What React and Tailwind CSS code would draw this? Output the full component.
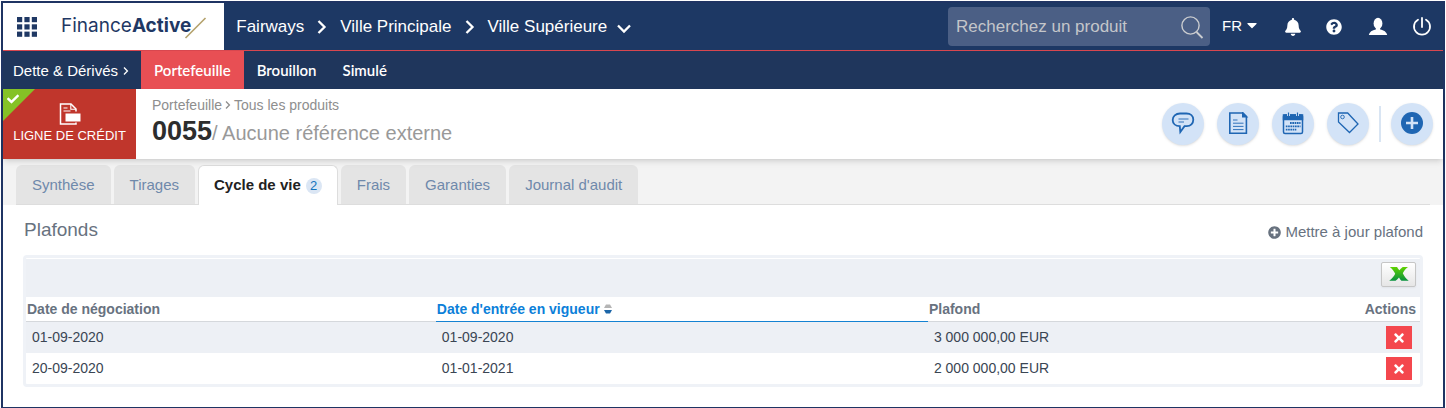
import React, { useState } from "react";
import { FaBell, FaCaretDown, FaCheck, FaPlusCircle, FaQuestionCircle, FaTimes } from "react-icons/fa";

const tabs = [
  { id: "synthese", label: "Synthèse" },
  { id: "tirages", label: "Tirages" },
  { id: "cycle", label: "Cycle de vie", count: 2 },
  { id: "frais", label: "Frais" },
  { id: "garanties", label: "Garanties" },
  { id: "audit", label: "Journal d'audit" },
];

const rows = [
  { negociation: "01-09-2020", vigueur: "01-09-2020", plafond: "3 000 000,00 EUR" },
  { negociation: "20-09-2020", vigueur: "01-01-2021", plafond: "2 000 000,00 EUR" },
];

const Chevron = ({ className }) => (
  <svg className={className} viewBox="0 0 10 14" fill="none" stroke="currentColor" strokeWidth="2.3">
    <path d="M1.500 1l6 6-6 6" />
  </svg>
);

const AppsIcon = () => (
  <svg className="h-5 w-5" viewBox="0 0 20 20" fill="#1f3864">
    {[0, 7.3, 14.6].map((y) =>
      [0, 7.4, 14.8].map((x) => <rect key={x + "-" + y} x={x} y={y} width="5.2" height="5.2" />)
    )}
  </svg>
);

const SearchIcon = () => (
  <svg className="h-6 w-6" viewBox="0 0 24 24" fill="none" stroke="#cbcdd0" strokeWidth="1.4">
    <circle cx="10.5" cy="10.5" r="8.6" />
    <path d="M16.5 17l6 6" strokeWidth="1.8" />
  </svg>
);

const UserIcon = () => (
  <svg className="h-5 w-5" viewBox="0 0 20 20" fill="currentColor">
    <ellipse cx="10" cy="6.400" rx="4.400" ry="5.600" />
    <path d="M7.800 10h4.400v2.400c3.600.5 6.400 2.600 7 5.600H.8c.6-3 3.400-5.100 7-5.600z" />
  </svg>
);

const PowerIcon = () => (
  <svg className="h-5 w-5" viewBox="0 0 20 20" fill="none" stroke="currentColor" strokeWidth="1.800" strokeLinecap="round">
    <path d="M10 1v9" />
    <path d="M6 2.700a8 8 0 1 0 8 0" />
  </svg>
);

const CreditIcon = () => (
  <svg className="h-6 w-6" viewBox="0 0 24 24" fill="none" stroke="#fff" strokeWidth="1.500">
    <path d="M18 9.500V7l-5-5H2.500v20H18v-1.500" />
    <path d="M12.800 2v5.200H18M5.500 6h4M5.500 9h7" strokeWidth="1.100" />
    <path d="M7.500 11.500h15v8h-15z" fill="#fff" stroke="none" />
  </svg>
);

const CommentIcon = () => (
  <svg className="h-6 w-6" viewBox="0 0 24 24" fill="none" stroke="#1f66b3" strokeWidth="1.800">
    <path d="M9 1.500h6.500c4 0 6.800 2.600 6.800 6.300s-2.800 6.400-6.500 6.400h-2.300L9.300 20l-.5-5.800c-4.300-.1-7.100-2.700-7.100-6.300S4.700 1.500 9 1.500z" />
    <path d="M7.500 7h10M7.500 10h5.500" strokeWidth="0.900" />
  </svg>
);

const DocumentIcon = () => (
  <svg className="h-6 w-6" viewBox="0 0 24 24" fill="none" stroke="#1f66b3" strokeWidth="1.600">
    <path d="M3.800 1h13l3.600 3.600v16.600H3.800z" />
    <path d="M16.800 1v3.600h3.600z" fill="#1f66b3" />
    <path d="M7 8h4.500M7 11.200h10.500M7 14.400h10.500M7 17.600h10.500" strokeWidth="0.900" />
  </svg>
);

const CalendarIcon = () => (
  <svg className="h-6 w-6" viewBox="0 0 24 24" fill="none" stroke="#1f66b3" strokeWidth="1.500">
    <rect x="2.500" y="3" width="19" height="18.500" rx="1.500" />
    <path d="M2.500 3h19v4.500h-19z" fill="#1f66b3" />
    <path d="M7.500 .5V4M16.500 .5V4" stroke="#d3e3f7" strokeWidth="3" />
    <path d="M7.500 .5V4M16.500 .5V4" strokeWidth="1.200" />
    <path d="M9 11h10.500M4.800 14.300h14.700M4.800 17.600h10.500" strokeDasharray="1.700 0.600" strokeWidth="1.800" />
  </svg>
);

const TagIcon = () => (
  <svg className="h-6 w-6" viewBox="0 0 24 24" fill="none" stroke="#1f66b3" strokeWidth="1.300">
    <path d="M2.500 1h9.200L22 12l-8.500 8.500L2.500 10z" />
    <circle cx="6.500" cy="5" r="1.800" strokeWidth="0.900" />
  </svg>
);

const AddIcon = () => (
  <svg className="h-6 w-6" viewBox="0 0 24 24">
    <circle cx="12" cy="11" r="11" fill="#1f66b3" />
    <path d="M12 5v12M6 11h12" stroke="#d3e3f7" strokeWidth="2.600" />
  </svg>
);

const ExcelIcon = () => (
  <svg className="h-4 w-5" viewBox="0 0 20 16">
    <defs>
      <linearGradient id="xl" x1="0" y1="0" x2="0" y2="1">
        <stop offset="0" stopColor="#5fd200" />
        <stop offset="1" stopColor="#07913f" />
      </linearGradient>
    </defs>
    <path
      d="M.8 1h7.300c.7 1.300 1.300 2.300 2.400 3.200C11.600 3 12.400 1.700 13.800 1h5.200c-2.200 1.700-4 3.800-5.200 6.200 1.300 2.800 3 5.200 5.900 7.600h-7.300c-1-1-1.700-2.100-2.400-3.300-1 1.200-2.100 2.400-3.400 3.300H.2c2.600-2 4.700-4.300 6-7C5 5.200 3.400 3 .8 1z"
      fill="url(#xl)"
    />
  </svg>
);

const RoundButton = ({ label, children }) => (
  <button
    aria-label={label}
    className="flex h-[42px] w-[42px] items-center justify-center rounded-full bg-[#d3e3f7] shadow-sm"
  >
    {children}
  </button>
);

const App = () => {
  const [active, setActive] = useState("cycle");

  return (
    <div className="p-px font-['Liberation_Sans',Arial,sans-serif]">
      <div className="border-2 border-[#1f3463] bg-white pb-5">

        {/* Top bar */}
        <header className="flex h-12 border-b border-[#d8474f] bg-[#1d3864] text-white">
          <div className="flex items-center bg-white pl-3.5 pr-4">
            <button aria-label="Applications">
              <AppsIcon />
            </button>
            <a href="#" className="ml-6 flex items-center font-[Inter,sans-serif] text-[19px] text-[#1f3864]">
              <span className="font-normal">Finance</span>
              <span className="font-bold">Active</span>
              <svg className="-ml-[7px] h-6 w-6" viewBox="0 0 24 24" stroke="#b3a06a" strokeWidth="1.600">
                <path d="M1.500 23L21.500 3" />
              </svg>
            </a>
          </div>

          <nav className="flex items-center pl-3 text-[17px]">
            <a href="#">Fairways</a>
            <Chevron className="mx-[13px] h-3.5 w-2.5" />
            <a href="#">Ville Principale</a>
            <Chevron className="mx-[13px] h-3.5 w-2.5" />
            <a href="#">Ville Supérieure</a>
            <Chevron className="ml-3 mt-1 h-3.5 w-2.5 rotate-90" />
          </nav>

          <div className="ml-auto flex items-center pr-[11px]">
            <div className="flex h-[39px] w-[262px] items-center rounded bg-[#4b5f85] pl-2 pr-1.5">
              <input
                aria-label="Recherchez un produit"
                placeholder="Recherchez un produit"
                className="min-w-0 flex-1 bg-transparent text-[17px] outline-none placeholder:text-[#c4c6ca]"
              />
              <button aria-label="Rechercher">
                <SearchIcon />
              </button>
            </div>
            <button className="ml-3 flex items-center gap-0.5 text-[15px]">
              FR <FaCaretDown className="mb-1 h-4 w-4" />
            </button>
            <button aria-label="Notifications" className="ml-6">
              <FaBell className="h-[18px] w-[18px]" />
            </button>
            <button aria-label="Aide" className="ml-6">
              <FaQuestionCircle className="h-4 w-4" />
            </button>
            <button aria-label="Profil" className="ml-[26px]">
              <UserIcon />
            </button>
            <button aria-label="Déconnexion" className="ml-6">
              <PowerIcon />
            </button>
          </div>
        </header>

        {/* Sub navigation */}
        <nav className="flex h-[38px] items-stretch bg-[#1f365c] text-[15px] text-white">
          <a href="#" className="flex items-center gap-1 pl-2.5 pr-[11px] pt-0.5">
            Dette &amp; Dérivés
            <Chevron className="h-2 w-2" />
          </a>
          <div className="flex font-[Lato,sans-serif] font-semibold">
            <a href="#" className="flex items-center bg-[#e84f54] px-[13px]">Portefeuille</a>
            <a href="#" className="flex items-center px-[13px]">Brouillon</a>
            <a href="#" className="flex items-center px-[13px]">Simulé</a>
          </div>
        </nav>

        {/* Product header */}
        <div className="relative flex h-[70px] items-center bg-white shadow-md">
          <div className="relative flex h-full w-[133px] flex-col items-center justify-center bg-[#c0362c] text-[13px] text-white">
            <svg className="absolute left-0 top-0 h-8 w-8" viewBox="0 0 32 32">
              <path d="M0 0h32L0 32z" fill="#85c226" />
            </svg>
            <FaCheck className="absolute left-1 top-1 h-3 w-3" />
            <CreditIcon />
            LIGNE DE CRÉDIT
          </div>
          <div className="ml-4 pb-0.5">
            <div className="flex items-center gap-0.5 text-sm leading-4 text-[#8e8e8e]">
              <a href="#">Portefeuille</a>
              <Chevron className="h-2 w-2" />
              <a href="#">Tous les produits</a>
            </div>
            <h1 className="mt-0.5 text-xl leading-8 text-[#999]">
              <span className="text-[27px] font-bold text-[#2d2d2d]">0055</span>/ Aucune référence externe
            </h1>
          </div>
          <div className="ml-auto flex items-center gap-[13px] pr-2.5">
            <RoundButton label="Commentaires"><CommentIcon /></RoundButton>
            <RoundButton label="Documents"><DocumentIcon /></RoundButton>
            <RoundButton label="Calendrier"><CalendarIcon /></RoundButton>
            <RoundButton label="Étiquettes"><TagIcon /></RoundButton>
            <div className="-mx-[3px] h-9 w-0.5 bg-[#d9e5f3]" />
            <RoundButton label="Ajouter"><AddIcon /></RoundButton>
          </div>
        </div>

        {/* Tabs */}
        <div className="bg-[#f3f3f3] px-[13px] pt-1.5">
          <div role="tablist" className="flex gap-[3px] border-b border-[#ddd]">
            {tabs.map((tab) => (
              <button
                key={tab.id}
                role="tab"
                aria-selected={tab.id === active}
                onClick={() => setActive(tab.id)}
                className={
                  tab.id === active
                    ? "-mb-px flex h-10 items-center gap-[5px] rounded-t-md border border-b-0 border-[#ddd] bg-white px-[15px] text-[15px] font-bold text-[#222]"
                    : "flex h-[39px] items-center rounded-t-md bg-[#e4e4e4] px-4 pt-0.5 text-[15px] text-[#6f89ab]"
                }
              >
                {tab.label}
                {tab.count && (
                  <span className="flex h-4 w-4 items-center justify-center rounded-full bg-[#dbe6f4] text-[13px] font-normal text-[#1473bd]">
                    {tab.count}
                  </span>
                )}
              </button>
            ))}
          </div>
        </div>

        {/* Content */}
        <main className="px-5 text-[#68727f]">
          <div className="flex h-[50px] items-center justify-between pl-px">
            <h2 className="text-[19px]">Plafonds</h2>
            <button className="flex items-center gap-1 pt-1 text-[15px]">
              <FaPlusCircle className="h-[13px] w-[13px]" />
              Mettre à jour plafond
            </button>
          </div>

          <div className="rounded border-3 border-[#eff2f7] pt-px">
            <div className="flex h-[38px] items-center justify-end bg-[#edf0f5] px-1 pb-2">
              <button
                aria-label="Exporter vers Excel"
                className="flex h-[25px] w-[35px] items-center justify-center rounded-xs border border-[#c6c6c6] bg-linear-to-b from-white to-[#e6e6e6] shadow-xs"
              >
                <ExcelIcon />
              </button>
            </div>
            <table className="w-full table-fixed border-separate border-spacing-0 text-sm">
              <thead>
                <tr className="h-[25px] text-left">
                  <th className="w-[29.4%] border-b border-[#d5d8dc] p-0 pl-px">Date de négociation</th>
                  <th className="w-[35.3%] border-b border-[#1482d2] p-0 pl-px text-[#0c7fd9]">
                    <button className="flex items-center gap-1">
                      Date d'entrée en vigueur
                      <svg className="h-2.5 w-2" viewBox="0 0 8 10">
                        <path d="M0 4l2-3.500h4L8 4z" fill="#b5b5b5" />
                        <path d="M0 6l2 3.500h4L8 6z" fill="#1c66a8" />
                      </svg>
                    </button>
                  </th>
                  <th className="border-b border-[#d5d8dc] p-0 pl-px">Plafond</th>
                  <th className="w-20 border-b border-[#d5d8dc] p-0 pr-1 text-right">Actions</th>
                </tr>
              </thead>
              <tbody className="text-[#3a4553]">
                {rows.map((row) => (
                  <tr key={row.negociation} className="h-[31px] odd:bg-[#edf0f5]">
                    <td className="px-1.5 pb-0.5 pt-0">{row.negociation}</td>
                    <td className="px-1.5 pb-0.5 pt-0">{row.vigueur}</td>
                    <td className="px-1.5 pb-0.5 pt-0">{row.plafond}</td>
                    <td className="py-0 pr-2">
                      <button
                        aria-label="Supprimer"
                        className="ml-auto flex h-[23px] w-[26px] items-center justify-center bg-[#f4474d] text-white"
                      >
                        <FaTimes className="h-3.5 w-3.5" />
                      </button>
                    </td>
                  </tr>
                ))}
              </tbody>
            </table>
          </div>
        </main>
      </div>
    </div>
  );
};

export default App;
